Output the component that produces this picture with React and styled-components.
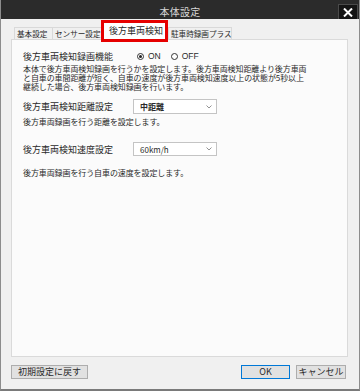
import styled, { createGlobalStyle } from "styled-components";

const Global = createGlobalStyle`
  body {
    margin: 0;
    background: #ffffff;
    font-family: "Noto Sans CJK JP", "Noto Sans", sans-serif;
  }
`;

const Window = styled.div`
  width: 360px;
  height: 391px;
  box-sizing: border-box;
  display: flex;
  flex-direction: column;
  background: #f0f0f0;
  border-left: 1px solid #8c8c8c;
  border-right: 1px solid #8c8c8c;
  border-bottom: 2px solid #7a7a7a;
  color: #2a2a2a;
`;

const TitleBar = styled.div`
  height: 19px;
  flex: none;
  background: #2b2b2b;
  display: grid;
  grid-template-columns: 1fr auto 1fr;
  align-items: end;
`;

const Title = styled.div`
  grid-column: 2;
  align-self: center;
  padding-top: 3px;
  font-size: 10px;
  color: #d8d8d8;
  letter-spacing: 0.3px;
`;

const Close = styled.div`
  grid-column: 3;
  justify-self: end;
  width: 20px;
  height: 15px;
  margin-right: 1px;
  box-sizing: border-box;
  background: #151515;
  border: 1px solid #4a4a4a;
  border-bottom: none;
  display: flex;
  align-items: center;
  justify-content: center;
`;

const TabStrip = styled.div`
  height: 20px;
  flex: none;
  display: flex;
  align-items: flex-end;
  padding-left: 13px;
`;

const Tab = styled.div`
  height: 12px;
  box-sizing: border-box;
  width: ${(p) => p.w}px;
  border: 1px solid #d9d9d9;
  border-bottom: none;
  border-right: none;
  background: #f0f0f0;
  font-size: 7.6px;
  line-height: 11px;
  padding-left: ${(p) => p.pl || 2}px;
  white-space: nowrap;
  &:last-child {
    border-right: 1px solid #d9d9d9;
  }
`;

const ActiveTab = styled.div`
  height: 22px;
  width: 67px;
  box-sizing: border-box;
  margin-bottom: -3px;
  margin-left: -3px;
  position: relative;
  z-index: 1;
  border: 3px solid #e60000;
  background: #ffffff;
  font-size: 9px;
  line-height: 15px;
  padding-left: 5px;
  white-space: nowrap;
`;

const Body = styled.div`
  flex: 1;
  display: flex;
  padding: 0 11px 0 10px;
  min-height: 0;
`;

const Panel = styled.div`
  flex: 1;
  background: #fbfbfb;
  border: 1px solid #dadada;
  padding: 10px 12px 0 11px;
  display: flex;
  flex-direction: column;
`;

const Row = styled.div`
  display: flex;
  align-items: center;
  height: ${(p) => p.h}px;
  margin-top: ${(p) => p.mt || 0}px;
`;

const Label = styled.div`
  width: ${(p) => p.w}px;
  flex: none;
  font-size: 9px;
  white-space: nowrap;
`;

const Radio = styled.label`
  display: flex;
  align-items: center;
  gap: 4px;
  margin-right: 10px;
  font-family: "Liberation Sans", sans-serif;
  font-size: 8.5px;
`;

const Circle = styled.span`
  width: 7px;
  height: 7px;
  box-sizing: border-box;
  border-radius: 50%;
  border: 1px solid #333;
  background: #fff;
  display: flex;
  align-items: center;
  justify-content: center;
  &::after {
    content: "";
    width: 3px;
    height: 3px;
    border-radius: 50%;
    background: ${(p) => (p.on ? "#222" : "transparent")};
  }
`;

const Desc = styled.div`
  font-size: 8px;
  line-height: 9px;
  letter-spacing: -0.1px;
  white-space: nowrap;
  margin-top: ${(p) => p.mt || 0}px;
`;

const Select = styled.div`
  width: 84px;
  height: ${(p) => p.h}px;
  box-sizing: border-box;
  background: #ffffff;
  border: 1px solid #c4c4c4;
  display: flex;
  align-items: center;
  justify-content: space-between;
  padding: 0 4px 0 6px;
  font-size: 8px;
  font-weight: ${(p) => (p.bold ? 700 : 400)};
`;

const Footer = styled.div`
  flex: none;
  display: flex;
  align-items: center;
  padding: 8px 13px 10px 10px;
  gap: 6px;
`;

const Button = styled.div`
  height: 14px;
  box-sizing: border-box;
  width: ${(p) => p.w}px;
  background: #e1e1e1;
  border: 1px solid ${(p) => (p.primary ? "#0078d7" : "#adadad")};
  font-size: 9px;
  line-height: 12px;
  text-align: center;
  white-space: nowrap;
  margin-left: ${(p) => (p.push ? "auto" : "0")};
`;

const Chevron = () => (
  <svg width="6" height="4" viewBox="0 0 6 4">
    <path d="M0.5 0.5 L3 3 L5.5 0.5" fill="none" stroke="#777" strokeWidth="0.8" />
  </svg>
);

const App = () => (
  <>
    <Global />
    <Window>
      <TitleBar>
        <Title>本体設定</Title>
        <Close>
          <svg width="10" height="9" viewBox="0 0 10 9">
            <path d="M1 0.5 L9 8.5 M9 0.5 L1 8.5" stroke="#fff" strokeWidth="2" />
          </svg>
        </Close>
      </TitleBar>
      <TabStrip>
        <Tab w={38}>基本設定</Tab>
        <Tab w={52}>センサー設定</Tab>
        <ActiveTab>後方車両検知</ActiveTab>
        <Tab w={64} pl={2}>駐車時録画プラス</Tab>
      </TabStrip>
      <Body>
        <Panel>
          <Row h={12}>
            <Label w={114}>後方車両検知録画機能</Label>
            <Radio>
              <Circle on />
              ON
            </Radio>
            <Radio>
              <Circle />
              OFF
            </Radio>
          </Row>
          <Desc mt={2}>
            本体で後方車両検知録画を行うかを設定します。後方車両検知距離より後方車両
            <br />
            と自車の車間距離が短く、自車の速度が後方車両検知速度以上の状態が5秒以上
            <br />
            継続した場合、後方車両検知録画を行います。
          </Desc>
          <Row h={15} mt={8}>
            <Label w={110}>後方車両検知距離設定</Label>
            <Select h={15} bold>
              中距離
              <Chevron />
            </Select>
          </Row>
          <Desc mt={3}>後方車両録画を行う距離を設定します。</Desc>
          <Row h={14} mt={16}>
            <Label w={110}>後方車両検知速度設定</Label>
            <Select h={14}>
              60km/h
              <Chevron />
            </Select>
          </Row>
          <Desc mt={12}>後方車両録画を行う自車の速度を設定します。</Desc>
        </Panel>
      </Body>
      <Footer>
        <Button w={77}>初期設定に戻す</Button>
        <Button w={49} primary push>
          OK
        </Button>
        <Button w={50}>キャンセル</Button>
      </Footer>
    </Window>
  </>
);

export default App;
